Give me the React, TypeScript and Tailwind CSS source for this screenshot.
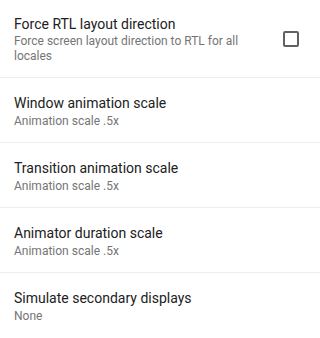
const rows = [
  { title: "Window animation scale", summary: "Animation scale .5x" },
  { title: "Transition animation scale", summary: "Animation scale .5x" },
  { title: "Animator duration scale", summary: "Animation scale .5x" },
  { title: "Simulate secondary displays", summary: "None" },
];

export default function App() {
  return (
    <div className="w-[320px] h-[338px] overflow-hidden bg-white font-['Roboto',sans-serif]">
      {/* RTL toggle */}
      <div className="flex items-center pl-[14px] pr-[21px] h-[78px] border-b border-[#eeeeee]">
        <div className="flex-1 pr-4">
          <div className="text-[14px] leading-[20px] text-[#212121]">Force RTL layout direction</div>
          <div className="text-[12px] leading-[15px] text-[#757575]">
            Force screen layout direction to RTL for all locales
          </div>
        </div>
        <div className="w-4 h-4 border-2 border-[#616161] rounded-[2px]" />
      </div>

      {rows.map((r) => (
        <div
          key={r.title}
          className="flex flex-col justify-center pl-[14px] pt-[2px] h-[65px] border-b border-[#eeeeee] last:border-b-0"
        >
          <div className="text-[14px] leading-[20px] text-[#212121]">{r.title}</div>
          <div className="text-[12px] leading-[17px] text-[#757575]">{r.summary}</div>
        </div>
      ))}
    </div>
  );
}
